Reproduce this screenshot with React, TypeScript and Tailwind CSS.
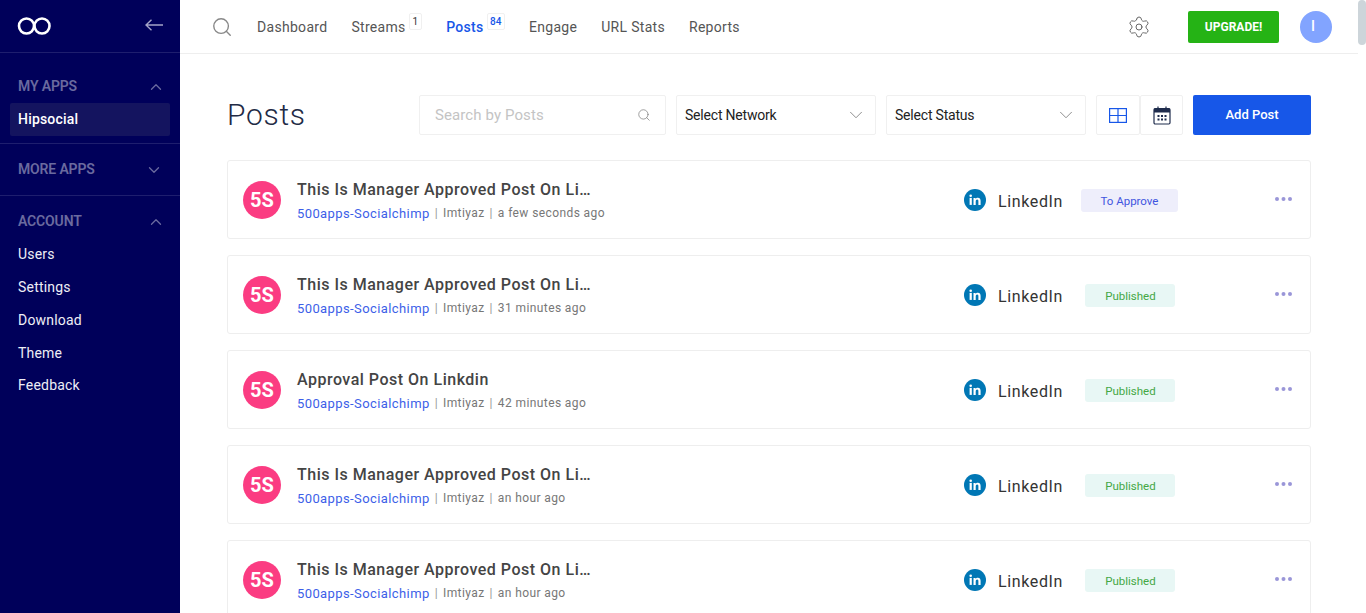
import { Search, ChevronUp, ChevronDown, Settings } from "lucide-react";

const nav = [
  { label: "Dashboard" },
  { label: "Streams", badge: "1" },
  { label: "Posts", badge: "84", active: true },
  { label: "Engage" },
  { label: "URL Stats" },
  { label: "Reports" },
];

const posts = [
  { title: "This Is Manager Approved Post On Li…", time: "a few seconds ago", status: "To Approve" },
  { title: "This Is Manager Approved Post On Li…", time: "31 minutes ago", status: "Published" },
  { title: "Approval Post On Linkdin", time: "42 minutes ago", status: "Published" },
  { title: "This Is Manager Approved Post On Li…", time: "an hour ago", status: "Published" },
  { title: "This Is Manager Approved Post On Li…", time: "an hour ago", status: "Published" },
];

function SectionHead({ label, open }: { label: string; open: boolean }) {
  return (
    <div className="flex items-center justify-between pr-[15px] pl-[18px] text-[14px] font-semibold tracking-[-0.15px] text-[#6a6a9f]">
      <span>{label}</span>
      {open ? <ChevronUp size={18} strokeWidth={1.7} /> : <ChevronDown size={18} strokeWidth={1.7} className="mr-[2px]" />}
    </div>
  );
}

function LinkedInIcon() {
  return (
    <svg width="22" height="22" viewBox="0 0 22 22" className="shrink-0">
      <circle cx="11" cy="11" r="11" fill="#0077b5" />
      <rect x="5.6" y="8.9" width="2.2" height="7" fill="#fff" />
      <circle cx="6.7" cy="6.8" r="1.3" fill="#fff" />
      <path d="M9.5 8.9h2.1v1c.4-.7 1.2-1.2 2.3-1.2 2.1 0 2.7 1.3 2.7 3.3v3.9h-2.2v-3.5c0-1-.2-1.8-1.2-1.8s-1.5.8-1.5 1.8v3.5H9.5z" fill="#fff" />
    </svg>
  );
}

function CalendarIcon() {
  return (
    <svg width="18" height="19" viewBox="0 0 18 19" fill="none">
      <rect x="1" y="2.5" width="16" height="15.5" rx="1.2" stroke="#1f2c4d" strokeWidth="1.2" />
      <rect x="1" y="2.5" width="16" height="4" fill="#1f2c4d" />
      <path d="M5 .5v3.5M13 .5v3.5" stroke="#1f2c4d" strokeWidth="1.2" />
      <g fill="#1f2c4d">
        <rect x="4.5" y="9" width="2" height="2" />
        <rect x="8" y="9" width="2" height="2" />
        <rect x="11.5" y="9" width="2" height="2" />
        <rect x="4.5" y="12.5" width="2" height="2" />
        <rect x="8" y="12.5" width="2" height="2" />
        <rect x="11.5" y="12.5" width="2" height="2" />
      </g>
    </svg>
  );
}

function Dots() {
  return (
    <svg width="17" height="4" viewBox="0 0 17 4" className="mt-[-2px] mr-[18px] ml-auto" fill="#9a96d8">
      <circle cx="2" cy="2" r="2" />
      <circle cx="8.5" cy="2" r="2" />
      <circle cx="15" cy="2" r="2" />
    </svg>
  );
}

function Select({ label }: { label: string }) {
  return (
    <div className="flex h-10 w-[200px] items-center justify-between rounded-[2px] border border-[#f0f0f0] pr-[8px] pl-2 text-[14px] tracking-[-0.2px] text-[#222]">
      <span>{label}</span>
      <ChevronDown size={22} strokeWidth={0.9} className="text-[#777]" />
    </div>
  );
}

export default function App() {
  return (
    <div className="relative flex h-[613px] overflow-hidden bg-white font-['Roboto',sans-serif]">
      <aside className="w-[180px] shrink-0 bg-[#00005a] text-white">
        <div className="flex h-[53px] items-center justify-between border-b border-[#1e1e6e] pr-[17px] pl-[17px]">
          <svg width="35" height="20" viewBox="0 0 35 20" fill="none" stroke="#fff" strokeWidth="2.6">
            <circle cx="9.5" cy="10" r="7.5" />
            <circle cx="25" cy="10" r="7.5" />
          </svg>
          <svg width="18" height="12" viewBox="0 0 18 12" fill="none" stroke="#a4a4c8" strokeWidth="1.4" className="mt-[-3px]">
            <path d="M18 6H1M6.5 .8 1 6l5.5 5.2" />
          </svg>
        </div>
        <div className="border-b border-[#1e1e6e] pt-[23px] pb-[7px]">
          <SectionHead label="MY APPS" open />
          <div className="mx-[10px] mt-[6px] flex h-[33px] items-center rounded-[2px] bg-[#14145f] pl-[8px] text-[14px] font-medium tracking-[0.2px]">Hipsocial</div>
        </div>
        <div className="border-b border-[#1e1e6e] pt-[15px] pb-[15px]">
          <SectionHead label="MORE APPS" open={false} />
        </div>
        <div className="pt-[15px]">
          <SectionHead label="ACCOUNT" open />
          <div className="mt-[6px] flex flex-col text-[14px] tracking-[0.2px] text-[#eeeef6]">
            {["Users", "Settings", "Download", "Theme", "Feedback"].map((t) => (
              <div key={t} className="flex h-[33px] items-center pl-[18px] last:mt-[-1px]">{t}</div>
            ))}
          </div>
        </div>
      </aside>

      <main className="min-w-0 flex-1 pr-2">
        <header className="flex h-[54px] items-center border-b border-[#eeeeee]">
          <Search size={22} strokeWidth={1.5} className="ml-[31px] text-[#888]" />
          <nav className="mt-[1px] ml-[24px] flex items-center gap-[24px] text-[14px] tracking-[0.3px] text-[#555]">
            {nav.map((n) => (
              <div key={n.label} className={`flex items-start ${n.active ? "font-medium text-[#1757e8]" : ""}`}>
                <span>{n.label}</span>
                {n.badge && (
                  <span className={`mt-[-4px] ml-[3px] rounded-[2px] border border-[#f0f0f0] text-[10px] leading-[15px] tracking-normal ${n.active ? "px-[2.5px] text-[#1757e8]" : "px-[3px] text-[#333]"}`}>{n.badge}</span>
                )}
              </div>
            ))}
          </nav>
          <Settings size={24} strokeWidth={1} className="ml-auto text-[#666]" />
          <div className="ml-[37px] flex h-8 w-[91px] items-center justify-center rounded-[2px] bg-[#25b315] text-[12px] font-bold text-white">UPGRADE!</div>
          <div className="mr-[26px] ml-[21px] flex h-8 w-8 items-center justify-center rounded-full bg-[#82a4ff] pr-[6px] text-[14px] font-medium text-white">I</div>
        </header>

        <div className="pr-[47px] pl-[47px]">
          <div className="mt-[41px] flex h-10 items-center">
            <h1 className="mt-[-2px] text-[30px] font-light tracking-[0.7px] text-[#222a45]">Posts</h1>
            <div className="ml-auto flex items-center gap-[10px]">
              <div className="flex h-10 w-[247px] items-center justify-between rounded-[2px] border border-[#f0f0f0] pr-[14px] pl-[15px] text-[15px] tracking-[0.1px] text-[#c4c4c4]">
                <span>Search by Posts</span>
                <Search size={14} strokeWidth={1.2} className="text-[#777]" />
              </div>
              <Select label="Select Network" />
              <Select label="Select Status" />
              <div className="flex">
                <div className="flex h-10 w-[44px] items-center justify-center rounded-[2px] border border-[#f0f0f0]">
                  <svg width="18" height="15" viewBox="0 0 18 15" fill="none" stroke="#1757e8" strokeWidth="1.2">
                    <rect x="0.6" y="0.6" width="16.8" height="13.8" />
                    <path d="M9 .6v13.8M.6 7.5h16.8" />
                  </svg>
                </div>
                <div className="flex h-10 w-[43px] items-center justify-center rounded-[2px] border border-[#f0f0f0]">
                  <CalendarIcon />
                </div>
              </div>
              <div className="flex h-10 w-[118px] items-center justify-center rounded-[2px] bg-[#1757e8] text-[13px] font-medium text-white">Add Post</div>
            </div>
          </div>

          <div className="mt-[25px] flex flex-col gap-[16px]">
            {posts.map((p, i) => (
              <div key={i} className="flex h-[79px] shrink-0 items-center rounded-[3px] border border-[#eeeeee] pl-[15px]">
                <div className="flex h-[38px] w-[38px] shrink-0 items-center justify-center rounded-full bg-[#fb3c82] text-[20px] font-bold text-white">5S</div>
                <div className="mt-[2px] ml-[16px] w-[300px]">
                  <div className="text-[16px] leading-[19px] font-medium tracking-[0.5px] whitespace-nowrap text-[#444]">{p.title}</div>
                  <div className="mt-[7px] flex items-center text-[12px] leading-[15px] tracking-[0.4px] whitespace-nowrap text-[#777]">
                    <span className="text-[13px] text-[#3d5fe8]">500apps-Socialchimp</span>
                    <span className="mx-[5px] text-[#999]">|</span>
                    <span>Imtiyaz</span>
                    <span className="mx-[5px] text-[#999]">|</span>
                    <span>{p.time}</span>
                  </div>
                </div>
                <div className="ml-[367px] flex items-center">
                  <LinkedInIcon />
                  <span className="mt-[4px] ml-[12px] text-[16px] tracking-[0.62px] text-[#333]">LinkedIn</span>
                </div>
                <div className="mt-[2px] flex w-[115px] justify-center pl-[18px]">
                  <span className={`flex h-[23px] items-center justify-center rounded-[3px] pt-[2px] text-[11.5px] ${p.status === "Published" ? "ml-[2px] w-[90px] bg-[#e8f7f5] text-[#45a845]" : "w-[97px] bg-[#eeeefb] text-[#3f55e0]"}`}>{p.status}</span>
                </div>
                <Dots />
              </div>
            ))}
          </div>
        </div>
      </main>
      <div className="absolute top-0 right-0 h-full w-2 bg-white"><div className="h-[45px] w-2 rounded-[4px] bg-[#cdd5da]" /></div>
    </div>
  );
}
